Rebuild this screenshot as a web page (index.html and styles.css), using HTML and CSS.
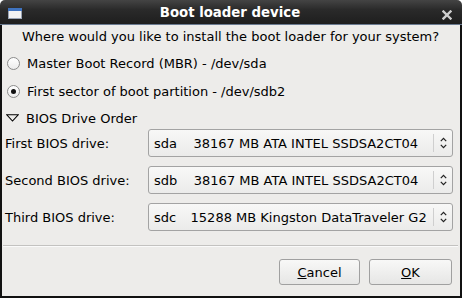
FILE: index.html
```html
<!DOCTYPE html>
<html lang="en">
  <head>
    <meta charset="UTF-8" />
    <title>Boot loader device</title>
    <link rel="stylesheet" href="styles.css">
  </head>
  <body>
    <div class="window">
      <div class="titlebar">
        <svg class="win-icon" width="14" height="11" viewBox="0 0 14 11">
          <rect x="0.5" y="0.5" width="13" height="10" fill="#f2f2f2" stroke="#9aa4b4" />
          <rect x="0" y="0" width="14" height="3" fill="#3f73bf" />
        </svg>
        <span class="title">Boot loader device</span>
        <svg class="close" width="10" height="10" viewBox="0 0 10 10">
          <path d="M1.5 1.5 L8.5 8.5 M8.5 1.5 L1.5 8.5" stroke="#cfcfcf" stroke-width="2.4" stroke-linecap="square" />
        </svg>
      </div>

      <div class="content">
        <p class="question">Where would you like to install the boot loader for your system?</p>

        <div class="options">
          <label class="option">
            <span class="radio"></span>
            Master Boot Record (MBR) - /dev/sda
          </label>
          <label class="option">
            <span class="radio checked"></span>
            First sector of boot partition - /dev/sdb2
          </label>
        </div>

        <div class="expander">
          <svg width="13" height="8" viewBox="0 0 13 8">
            <path d="M0.8 0.8 L12.2 0.8 L6.5 7 Z" fill="none" stroke="#000" stroke-width="1.1" stroke-linejoin="miter" />
          </svg>
          <span>BIOS Drive Order</span>
        </div>

        <div class="drives">
          <span class="drive-label">First BIOS drive:</span>
          <div class="combo">
            <span class="combo-text">sda    38167 MB ATA INTEL SSDSA2CT04</span>
            <span class="combo-arrow">
              <svg width="7" height="12" viewBox="0 0 7 12">
                <path d="M0.8 4.2 L3.5 1.3 L6.2 4.2 M0.8 7.8 L3.5 10.7 L6.2 7.8" fill="none" stroke="#222" stroke-width="1.2" />
              </svg>
            </span>
          </div>

          <span class="drive-label">Second BIOS drive:</span>
          <div class="combo">
            <span class="combo-text">sdb    38167 MB ATA INTEL SSDSA2CT04</span>
            <span class="combo-arrow">
              <svg width="7" height="12" viewBox="0 0 7 12">
                <path d="M0.8 4.2 L3.5 1.3 L6.2 4.2 M0.8 7.8 L3.5 10.7 L6.2 7.8" fill="none" stroke="#222" stroke-width="1.2" />
              </svg>
            </span>
          </div>

          <span class="drive-label">Third BIOS drive:</span>
          <div class="combo">
            <span class="combo-text">sdc   <span class="nudge"></span>15288 MB Kingston DataTraveler G2</span>
            <span class="combo-arrow">
              <svg width="7" height="12" viewBox="0 0 7 12">
                <path d="M0.8 4.2 L3.5 1.3 L6.2 4.2 M0.8 7.8 L3.5 10.7 L6.2 7.8" fill="none" stroke="#222" stroke-width="1.2" />
              </svg>
            </span>
          </div>
        </div>

        <hr class="separator" />

        <div class="buttons">
          <button class="btn cancel"><u>C</u>ancel</button>
          <button class="btn ok"><u>O</u>K</button>
        </div>
      </div>
    </div>
  </body>
</html>
```

FILE: styles.css
```css
body {
  margin: 0;
  background-color: #ffffff;
  font-family: "DejaVu Sans", sans-serif;
  font-size: 13px;
  color: #000;
}

.window {
  width: 462px;
  height: 298px;
  display: flex;
  flex-direction: column;
  box-sizing: border-box;
}

.titlebar {
  height: 24px;
  flex: none;
  display: flex;
  align-items: center;
  background: linear-gradient(#444444, #2a2a2a 40%, #1e1e1e);
  border-radius: 5px 5px 0 0;
  border-bottom: 1px solid #6a7a90;
}

.win-icon {
  margin-left: 8px;
  margin-top: 2px;
}

.title {
  flex: 1;
  text-align: center;
  color: #ffffff;
  font-weight: bold;
  font-size: 13.3px;
  margin-left: -4px;
}

.close {
  margin-right: 10px;
  margin-top: 5px;
}

.content {
  flex: 1;
  background-color: #edecea;
  border-left: 2px solid #111;
  border-right: 2px solid #111;
  border-bottom: 2px solid #111;
  padding: 3px 7px 0 3px;
  display: flex;
  flex-direction: column;
}

.question {
  margin: 0 0 0 17px;
  line-height: 17px;
}

.options {
  margin-top: 4px;
  display: flex;
  flex-direction: column;
}

.option {
  height: 28px;
  display: flex;
  align-items: center;
  gap: 7px;
  padding-left: 2px;
}

.radio {
  width: 11px;
  height: 11px;
  border-radius: 50%;
  border: 1px solid #8c8c8c;
  background: linear-gradient(#ffffff, #ececec);
  display: inline-flex;
  align-items: center;
  justify-content: center;
}

.radio.checked::after {
  content: "";
  width: 5px;
  height: 5px;
  border-radius: 50%;
  background-color: #111;
}

.expander {
  margin-top: 4px;
  height: 18px;
  display: flex;
  align-items: center;
  gap: 7px;
  padding-left: 1px;
}

.drives {
  margin-top: 2px;
  display: grid;
  grid-template-columns: 143px 1fr;
  row-gap: 9px;
  align-items: center;
}

.combo {
  height: 28px;
  box-sizing: border-box;
  border: 1px solid #a3a3a3;
  border-radius: 3px;
  background: linear-gradient(#f8f8f7, #ebebea);
  display: flex;
  align-items: center;
}

.combo-text {
  flex: 1;
  padding-left: 5px;
  white-space: pre;
}

.nudge {
  display: inline-block;
  width: 2px;
}

.combo-arrow {
  width: 18px;
  height: 18px;
  border-left: 1px solid #cfcfcf;
  display: flex;
  align-items: center;
  justify-content: center;
}

.separator {
  margin: 14px -5px 0 -2px;
  border: none;
  border-top: 1px solid #c3c2c0;
  border-bottom: 1px solid #fafafa;
  height: 0;
}

.buttons {
  margin-top: 12px;
  display: flex;
  justify-content: flex-end;
  gap: 9px;
  padding-right: 1px;
}

.btn {
  height: 26px;
  font-family: "DejaVu Sans", sans-serif;
  font-size: 13px;
  color: #000;
  border: 1px solid #a0a0a0;
  border-radius: 3px;
  background: linear-gradient(#f8f8f7, #e6e6e5);
  padding: 0;
}

.cancel {
  width: 81px;
}

.ok {
  width: 83px;
}
```
